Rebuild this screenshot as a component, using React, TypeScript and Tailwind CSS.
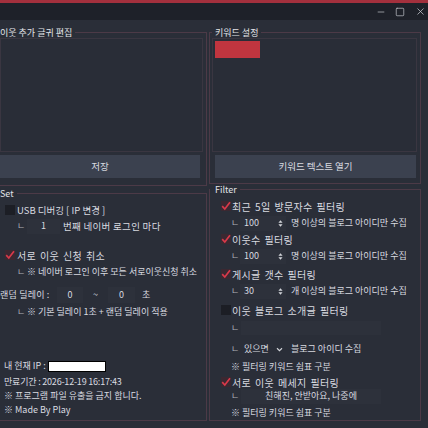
import { Minus, Square, X } from "lucide-react";
import type { ReactNode } from "react";

const Check = ({ on }: { on?: boolean }) => (
  <span
    className={`flex h-[10px] w-[10px] shrink-0 items-center justify-center ${
      on ? "bg-[#3b2831]" : "bg-[#1c1e25]"
    }`}
  >
    {on && (
      <svg viewBox="0 0 10 10" className="h-[10px] w-[10px]">
        <path d="M1.2 5.2 L3.8 8 L9 1.2" fill="none" stroke="#d9394a" strokeWidth="1.7" />
      </svg>
    )}
  </span>
);

const Group = ({
  title,
  className,
  legendClass,
  children,
}: {
  title: string;
  className?: string;
  legendClass?: string;
  children: ReactNode;
}) => (
  <fieldset className={`min-w-0 border border-[#4c3a47] ${className ?? ""}`}>
    <legend className={`pr-[3px] text-[9px] leading-[11px] text-[#e2e4e8] ${legendClass ?? ""}`}>{title}</legend>
    {children}
  </fieldset>
);

const Spin = ({ value }: { value: string }) => (
  <span className="flex h-[15px] w-[46px] items-center justify-between bg-[#2d313b] pl-[4px] pr-[3px]">
    <span>{value}</span>
    <svg viewBox="0 0 6 10" className="h-[9px] w-[5px]">
      <path d="M0.5 4 L3 1 L5.5 4 Z M0.5 6 L3 9 L5.5 6 Z" fill="#d4d6db" />
    </svg>
  </span>
);

const Sub = "text-[#aeb1b8]";
const Label = "whitespace-nowrap text-[10px] tracking-[0.3px] [word-spacing:1.5px]";

export default function App() {
  return (
    <div className="flex h-[428px] w-[428px] flex-col overflow-hidden bg-[#2a2e38] font-['Noto_Sans_CJK_KR','Noto_Sans',sans-serif] text-[9px] text-[#d9dbe0]">
      {/* title bar */}
      <div className="flex h-[20px] shrink-0 items-center justify-end border-t-[3px] border-[#a3303d] bg-[#1e2129] pr-[2px] text-[#c9ccd2]">
        <Minus className="h-[10px] w-[10px]" strokeWidth={1.6} />
        <Square className="ml-[9px] h-[10px] w-[10px]" strokeWidth={1.6} />
        <X className="ml-[10px] h-[11px] w-[11px]" strokeWidth={1.6} />
      </div>

      <div className="flex pt-[7px]">
        {/* left column */}
        <div className="flex w-[207px] flex-col">
          <Group title="이웃 추가 글귀 편집" className="h-[159px] border-l-0 pr-[3px]">
            <div className="h-[114px] w-[203px] border border-[#3a3641] bg-[#292d37]" />
            <button className="mt-[3px] h-[23px] w-[200px] bg-[#3b414f] text-[9.5px] text-[#d9dbe0]">저장</button>
          </Group>

          <Group title="Set" className="mt-[2px] h-[233px] border-l-0">
            <div className="mt-[3px] flex h-[16px] items-center pl-[5px]">
              <Check />
              <span className="ml-[2px] whitespace-nowrap text-[9.5px]">USB 디버깅 [ IP 변경 ]</span>
            </div>
            <div className="flex h-[16px] items-center pl-[17px]">
              <span className={`w-[10px] ${Sub}`}>ㄴ</span>
              <span className="flex h-[15px] w-[33px] items-center justify-center bg-[#2d313b]">1</span>
              <span className="ml-[3px] whitespace-nowrap text-[9.5px] tracking-[0.3px]">번째 네이버 로그인 마다</span>
            </div>
            <div className="mt-[13px] flex h-[16px] items-center pl-[5px]">
              <Check on />
              <span className={`ml-[2px] ${Label}`}>서로 이웃 신청 취소</span>
            </div>
            <div className="mt-[1px] flex h-[16px] items-center pl-[17px]">
              <span className={`w-[10px] ${Sub}`}>ㄴ</span>
              <span className="whitespace-nowrap">※ 네이버 로그인 이후 모든 서로이웃신청 취소</span>
            </div>
            <div className="mt-[7px] flex h-[16px] items-center">
              <span className="w-[57px] whitespace-nowrap tracking-[0.2px]">랜덤 딜레이 :</span>
              <span className="flex h-[16px] w-[26px] items-center justify-center bg-[#2d313b]">0</span>
              <span className="w-[25px] text-center">~</span>
              <span className="flex h-[16px] w-[27px] items-center justify-center bg-[#2d313b]">0</span>
              <span className="ml-[7px]">초</span>
            </div>
            <div className="mt-[1px] flex h-[16px] items-center pl-[17px]">
              <span className={`w-[10px] ${Sub}`}>ㄴ</span>
              <span className="whitespace-nowrap">※ 기본 딜레이 1초 + 랜덤 딜레이 적용</span>
            </div>
            <div className="mt-[38px] flex h-[16px] items-center pl-[4px]">
              <span className="w-[44px] whitespace-nowrap">내 현재 IP :</span>
              <span className="h-[11px] w-[58px] border border-black bg-white" />
            </div>
            <div className="mt-[1px] flex h-[14px] items-center whitespace-nowrap pl-[4px] tracking-[-0.2px]">
              만료기간 : 2026-12-19 16:17:43
            </div>
            <div className="flex h-[14px] items-center whitespace-nowrap pl-[4px]">※ 프로그램 파일 유출을 금지 합니다.</div>
            <div className="flex h-[14px] items-center pl-[4px]">※ Made By Play</div>
          </Group>
        </div>

        {/* right column */}
        <div className="ml-[2px] flex w-[212px] flex-col">
          <Group title="키워드 설정" className="h-[157px] pl-[2px] pr-[3px]" legendClass="pl-[3px]">
            <div className="h-[114px] border border-[#3a3641] bg-[#292d37] p-[2px]">
              <div className="h-[17px] w-[45px] bg-[#c0353f]" />
            </div>
            <button className="ml-[3px] mt-[3px] h-[23px] w-[201px] bg-[#3b414f] text-[9.5px] text-[#d9dbe0]">
              키워드 텍스트 열기
            </button>
          </Group>

          <Group title="Filter" className="h-[237px]" legendClass="pl-[5px]">
            <div className="mt-[3px] flex h-[16px] items-center pl-[11px]">
              <Check on />
              <span className={`ml-[1px] ${Label}`}>최근 5일 방문자수 필터링</span>
            </div>
            <div className="mt-[1px] flex h-[16px] items-center pl-[21px]">
              <span className={`w-[9px] ${Sub}`}>ㄴ</span>
              <Spin value="100" />
              <span className="ml-[5px] whitespace-nowrap">명 이상의 블로그 아이디만 수집</span>
            </div>
            <div className="flex h-[16px] items-center pl-[11px]">
              <Check on />
              <span className={`ml-[1px] ${Label}`}>이웃수 필터링</span>
            </div>
            <div className="mt-[1px] flex h-[16px] items-center pl-[21px]">
              <span className={`w-[9px] ${Sub}`}>ㄴ</span>
              <Spin value="100" />
              <span className="ml-[5px] whitespace-nowrap">명 이상의 블로그 아이디만 수집</span>
            </div>
            <div className="mt-[2px] flex h-[16px] items-center pl-[11px]">
              <Check on />
              <span className={`ml-[1px] ${Label}`}>게시글 갯수 필터링</span>
            </div>
            <div className="mt-[1px] flex h-[16px] items-center pl-[21px]">
              <span className={`w-[9px] ${Sub}`}>ㄴ</span>
              <Spin value="30" />
              <span className="ml-[5px] whitespace-nowrap">개 이상의 블로그 아이디만 수집</span>
            </div>
            <div className="mt-[3px] flex h-[16px] items-center pl-[11px]">
              <Check />
              <span className={`ml-[1px] ${Label}`}>이웃 블로그 소개글 필터링</span>
            </div>
            <div className="mt-[2px] flex h-[16px] items-center pl-[21px]">
              <span className={`w-[10px] ${Sub}`}>ㄴ</span>
              <span className="h-[14px] w-[140px] bg-[#2d313b]" />
            </div>
            <div className="mt-[5px] flex h-[16px] items-center pl-[21px]">
              <span className={`w-[9px] ${Sub}`}>ㄴ</span>
              <span className="flex h-[15px] w-[46px] items-center justify-between pl-[4px] pr-[3px]">
                <span>있으면</span>
                <svg viewBox="0 0 8 6" className="h-[5px] w-[7px]">
                  <path d="M1 1.5 L4 4.5 L7 1.5" fill="none" stroke="#d4d6db" strokeWidth="1.3" />
                </svg>
              </span>
              <span className="ml-[5px] whitespace-nowrap">블로그 아이디 수집</span>
            </div>
            <div className="mt-[3px] flex h-[14px] items-center whitespace-nowrap pl-[21px]">※ 필터링 키워드 쉼표 구분</div>
            <div className="mt-[1px] flex h-[14px] items-center pl-[11px]">
              <Check on />
              <span className={`ml-[1px] ${Label}`}>서로 이웃 메세지 필터링</span>
            </div>
            <div className="flex h-[14px] items-center pl-[21px]">
              <span className={`w-[10px] ${Sub}`}>ㄴ</span>
              <span className="flex h-[15px] w-[140px] items-center justify-center bg-[#2d313b]">친해진, 안받아요, 나중에</span>
            </div>
            <div className="mt-[3px] flex h-[14px] items-center whitespace-nowrap pl-[21px]">※ 필터링 키워드 쉼표 구분</div>
          </Group>
        </div>
      </div>
    </div>
  );
}
